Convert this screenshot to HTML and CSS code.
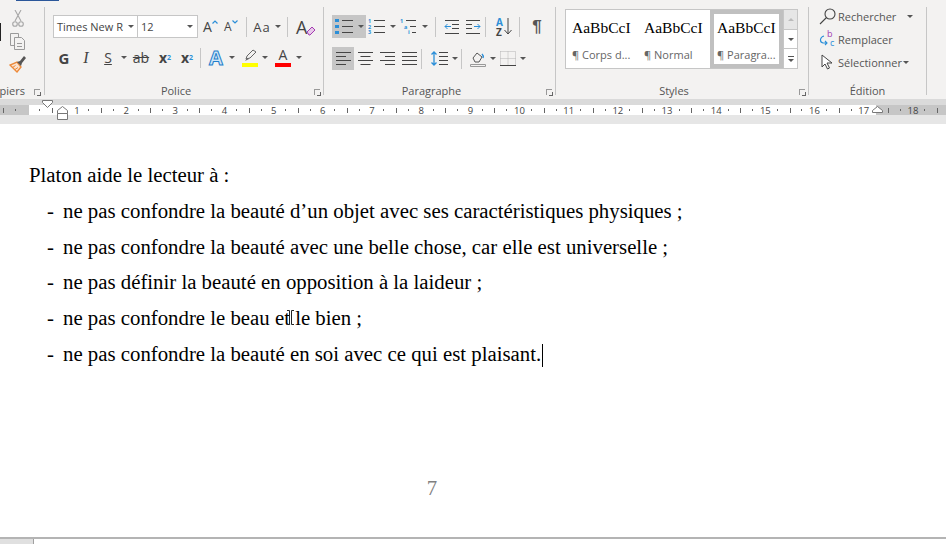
FILE: index.html
```html
<!DOCTYPE html>
<html lang="fr">
<head>
  <meta charset="UTF-8" />
  <title>Document - Word</title>
  <link rel="stylesheet" href="styles.css">
</head>
<body>

<!-- RIBBON -->
<header class="ribbon">
  <div class="tab-mark"></div>

  <!-- Presse-papiers -->
  <section class="group g-clip">
    <div class="clip-col">
      <svg width="18" height="17" viewBox="0 0 18 17" fill="none" stroke="#a6a6a6" stroke-width="1.100"><path d="M6 0l6 11M12 0L6 11"/><circle cx="6" cy="14" r="2.300"/><circle cx="12" cy="14" r="2.300"/></svg>
      <svg width="18" height="17" viewBox="0 0 18 17" fill="#f3f2f1" stroke="#9a9a9a"><path d="M1.500 .5h8v12h-8z"/><path d="M5.500 4.500h7l3 3v9h-10z"/><path d="M8 10.500h5M8 13.500h5" /></svg>
      <svg width="18" height="17" viewBox="0 0 18 17"><path d="M1 9l7 7 4-5-4-5z" fill="#fbe3cf" stroke="#ed8a3a" stroke-width="1.400"/><path d="M3.500 11.500l3-2M6 13.500l3-2" stroke="#ed8a3a"/><path d="M8 6l3-1 4-5 2 2-4 5-1 3z" fill="#555"/></svg>
    </div>
    <div class="cursor-tab"></div>
    <div class="group-label label-end">Presse-papiers</div>
    <span class="launch"></span>
  </section>

  <!-- Police -->
  <section class="group g-font">
    <div class="row r-font-1">
      <div class="combo c-name">Times New R<i class="caret"></i></div>
      <div class="combo c-size">12<i class="caret"></i></div>
      <div class="ico w-a1 big-a">A<svg width="6" height="4" viewBox="0 0 6 4" fill="none" stroke="#2b8fd8" stroke-width="1.200"><path d="M.5 3.500L3 1l2.500 2.500"/></svg></div>
      <div class="ico w-a2 small-a">A<svg width="6" height="4" viewBox="0 0 6 4" fill="none" stroke="#2b8fd8" stroke-width="1.200"><path d="M.5 .5L3 3l2.500-2.500"/></svg></div>
      <span class="sep"></span>
      <div class="ico w-aa case-a">Aa<i class="caret"></i></div>
      <span class="sep"></span>
      <div class="ico w-clear clear-a">A<svg width="10" height="10" viewBox="0 0 10 10"><path d="M1 6l5-5 3 3-5 5H3z" fill="#e8c9ea" stroke="#a23bb0"/></svg></div>
    </div>
    <div class="row r-font-2">
      <div class="ico w22 fmt bold">G</div>
      <div class="ico w22 fmt ital">I</div>
      <div class="ico w22 fmt under">S</div>
      <i class="caret solo c9"></i>
      <div class="ico w26 fmt strike">ab</div>
      <div class="ico w22 fmt bold-x">x<sub>2</sub></div>
      <div class="ico w22 fmt bold-x">x<sup>2</sup></div>
      <span class="sep s2"></span>
      <div class="ico w22 effect-a">A</div>
      <i class="caret solo c14"></i>
      <div class="ico w18">
        <svg width="17" height="18" viewBox="0 0 17 18"><path d="M4 10l1-3 6-6 3 2-6 6z" fill="#f3f2f1" stroke="#666"/><path d="M3 12l2-3 2 1z" fill="#666"/><rect y="14" width="16" height="4" fill="#ffff00"/></svg>
      </div>
      <i class="caret solo c15"></i>
      <div class="ico w18 color-a">A<b></b></div>
      <i class="caret solo c9 c-last"></i>
    </div>
    <div class="group-label">Police</div>
    <span class="launch"></span>
  </section>

  <!-- Paragraphe -->
  <section class="group g-para">
    <div class="row r-para-1">
      <div class="ico w34 on">
        <svg width="19" height="17" viewBox="0 0 19 17"><path d="M0 1h4v3H0zM0 7h4v3H0zM0 13h4v3H0z" fill="#2b8fd8"/><path d="M7 2.500h11M7 8.500h11M7 14.500h11" stroke="#444"/></svg>
        <i class="caret"></i>
      </div>
      <div class="ico w32">
        <svg width="18" height="18" viewBox="0 0 18 18"><text x="0" y="5" class="mini">1</text><text x="0" y="10.500" class="mini">2</text><text x="0" y="16" class="mini">3</text><path d="M6 2.500h11M6 8.500h11M6 14.500h11" stroke="#444"/></svg>
        <i class="caret"></i>
      </div>
      <div class="ico w32">
        <svg width="18" height="18" viewBox="0 0 18 18"><text x="0" y="5" class="mini">1</text><text x="4" y="10.500" class="mini">a</text><text x="8" y="16" class="mini">i</text><path d="M6 2.500h10M10 8.500h6M12 14.500h4" stroke="#444"/></svg>
        <i class="caret"></i>
      </div>
      <span class="sep s3"></span>
      <div class="ico w22">
        <svg width="15" height="14" viewBox="0 0 15 14" fill="none"><path d="M1 .5h14M8 4.500h7M8 8.500h7M1 13.500h14" stroke="#444"/><path d="M7 6.500H1M3.500 4L1 6.500 3.500 9" stroke="#2b8fd8"/></svg>
      </div>
      <div class="ico w22">
        <svg width="15" height="14" viewBox="0 0 15 14" fill="none"><path d="M0 .5h14M0 4.500h6M0 8.500h6M0 13.500h14" stroke="#444"/><path d="M8 6.500h6M11.500 4L14 6.500 11.500 9" stroke="#2b8fd8"/></svg>
      </div>
      <span class="sep s4"></span>
      <div class="ico w24 sort-az"><span class="az"><em>A</em><span>Z</span></span><svg width="8" height="17" viewBox="0 0 8 17" fill="none" stroke="#444"><path d="M4 0v16M.5 12L4 16l3.500-4"/></svg></div>
      <span class="sep s5"></span>
      <div class="ico w30 pilcrow">¶</div>
    </div>
    <div class="row r-para-2">
      <div class="ico w22 on"><svg width="15" height="13" viewBox="0 0 15 13" stroke="#444"><path d="M0 .5h15M0 4.500h10M0 8.500h15M0 12.500h10"/></svg></div>
      <div class="ico w22"><svg width="15" height="13" viewBox="0 0 15 13" stroke="#444"><path d="M0 .5h15M2.500 4.500h10M0 8.500h15M2.500 12.500h10"/></svg></div>
      <div class="ico w22"><svg width="15" height="13" viewBox="0 0 15 13" stroke="#444"><path d="M0 .5h15M5 4.500h10M0 8.500h15M5 12.500h10"/></svg></div>
      <div class="ico w22"><svg width="15" height="13" viewBox="0 0 15 13" stroke="#444"><path d="M0 .5h15M0 4.500h15M0 8.500h15M0 12.500h15"/></svg></div>
      <span class="sep s6"></span>
      <div class="ico w32">
        <svg width="17" height="15" viewBox="0 0 17 15" fill="none"><path d="M3 1v13M.5 3.500L3 1l2.500 2.500M.5 11.500L3 14l2.500-2.500" stroke="#2b8fd8" stroke-width="1.300"/><path d="M8 1.500h9M8 5.500h9M8 9.500h9M8 13.500h9" stroke="#444"/></svg>
        <i class="caret"></i>
      </div>
      <span class="sep s7"></span>
      <div class="ico w28">
        <svg width="16" height="16" viewBox="0 0 16 16" fill="none"><path d="M3 7l4-5 5 4-3 5H5z" stroke="#555"/><path d="M12 3c1 1 2 2 1 4" stroke="#2b8fd8" stroke-width="1.500"/><path d="M.5 13.500h15v2H.5z" stroke="#999"/></svg>
        <i class="caret"></i>
      </div>
      <div class="ico w32">
        <svg width="16" height="15" viewBox="0 0 16 15" fill="none"><path d="M.5 .5h15v14M.5 .5v14M8 .5v13M.5 7.500h15" stroke="#b5b5b5" stroke-dasharray="1 1"/><path d="M0 14.500h16" stroke="#444"/></svg>
        <i class="caret"></i>
      </div>
    </div>
    <div class="group-label">Paragraphe</div>
    <span class="launch"></span>
  </section>

  <!-- Styles -->
  <section class="group g-styles">
    <div class="gallery">
      <div class="style-card"><span class="style-sample">AaBbCcI</span><span class="style-name">¶ Corps d...</span></div>
      <div class="style-card"><span class="style-sample">AaBbCcI</span><span class="style-name">¶ Normal</span></div>
      <div class="style-card current"><span class="style-sample">AaBbCcI</span><span class="style-name">¶ Paragra...</span></div>
      <div class="gallery-scroll">
        <span class="disabled"><i class="up"></i></span>
        <span><i class="caret"></i></span>
        <span class="more"><i class="caret"></i></span>
      </div>
    </div>
    <div class="group-label">Styles</div>
    <span class="launch"></span>
  </section>

  <!-- Edition -->
  <section class="group g-edit">
    <div class="edit-col">
      <div class="edit-row">
        <svg width="18" height="17" viewBox="0 0 18 17" fill="none" stroke="#444" stroke-width="1.100"><circle cx="11" cy="6" r="5"/><path d="M7.500 9.500L1 16"/></svg>
        <span>Rechercher</span><i class="caret far"></i>
      </div>
      <div class="edit-row">
        <svg width="18" height="18" viewBox="0 0 18 18" fill="none"><text x="8" y="7" class="rep-b">b</text><text x="11" y="16" class="rep-c">c</text><path d="M5 6C1 7 0 12 4 13h4M6 11l2 2-2 2" stroke="#2b8fd8" stroke-width="1.100"/></svg>
        <span>Remplacer</span>
      </div>
      <div class="edit-row">
        <svg width="18" height="17" viewBox="0 0 18 17"><path d="M3 1v12l3-3 2.500 5 2-1L8 9h5z" fill="#fff" stroke="#444"/></svg>
        <span>Sélectionner</span><i class="caret near"></i>
      </div>
    </div>
    <div class="group-label">Édition</div>
  </section>
</header>

<!-- RULER -->
<div class="ruler-band">
  <div class="ruler">
    <span></span><span>1</span><span>2</span><span>3</span><span>4</span><span>5</span><span>6</span><span>7</span><span>8</span><span>9</span>
    <span>10</span><span>11</span><span>12</span><span>13</span><span>14</span><span>15</span><span>16</span><span>17</span><span>18</span>
  </div>
  <svg class="marker m-first" width="11" height="8" viewBox="0 0 11 8"><path d="M.5 .5h10v2l-5 5-5-5z" fill="#fff" stroke="#777"/></svg>
  <svg class="marker m-hang" width="11" height="14" viewBox="0 0 11 14"><path d="M5.500 .5l5 4v3H.5v-3z" fill="#fff" stroke="#777"/><path d="M.5 7.500h10v6H.5z" fill="#fff" stroke="#777"/></svg>
  <svg class="marker m-right" width="11" height="7" viewBox="0 0 11 7"><path d="M5.500 .5l5 4v2H.5v-2z" fill="#fff" stroke="#777"/></svg>
</div>

<!-- PAGE -->
<main class="page">
  <p class="doc-line">Platon aide le lecteur à :</p>
  <ul class="doc-list">
    <li>ne pas confondre la beauté d’un objet avec ses caractéristiques physiques ;</li>
    <li>ne pas confondre la beauté avec une belle chose, car elle est universelle ;</li>
    <li>ne pas définir la beauté en opposition à la laideur ;</li>
    <li>ne pas confondre le beau et le bien ;<svg class="ibeam" width="7" height="15" viewBox="0 0 7 15" fill="none" stroke="#222"><path d="M0 .5h2.500v14H0M7 .5H4.500v14H7"/></svg></li>
    <li>ne pas confondre la beauté en soi avec ce qui est plaisant.<span class="caret-line"></span></li>
  </ul>
  <div class="page-num">7</div>
</main>

<footer class="bottom"><div class="bottom-left"></div></footer>

</body>
</html>
```

FILE: styles.css
```css
html, body {
  margin: 0;
  height: 544px;
  overflow: hidden;
  background-color: #ffffff;
}
body {
  font-family: "Open Sans", "Noto Sans", sans-serif;
  color: #444;
}

/* RIBBON */
.ribbon {
  position: relative;
  display: flex;
  height: 99px;
  background-color: #f3f2f1;
}
.tab-mark {
  position: absolute;
  left: 16px;
  top: 0;
  width: 43px;
  height: 1px;
  background-color: #2b579a;
}
.group {
  position: relative;
  box-sizing: border-box;
  height: 88px;
  margin-top: 7px;
  border-right: 1px solid #c6c6c6;
  margin-right: 0;
}
.g-clip { width: 45px; }
.g-font { width: 279px; padding-left: 8px; }
.g-para { width: 232px; padding-left: 8px; }
.g-styles { width: 253px; padding-left: 9px; }
.g-edit { width: 118px; padding-left: 11px; }

.group-label {
  position: absolute;
  left: 0;
  right: 16px;
  bottom: -3px;
  height: 15px;
  font-size: 11px;
  line-height: 15px;
  text-align: center;
  white-space: nowrap;
  color: #555;
}
.g-edit .group-label { right: 0; }
.label-end {
  right: 19px;
  display: flex;
  justify-content: flex-end;
  overflow: hidden;
}

/* Presse-papiers */
.clip-col {
  display: flex;
  flex-direction: column;
  gap: 6px;
  padding: 3px 0 0 9px;
}
.clip-col svg { display: block; }
.cursor-tab {
  position: absolute;
  left: 0;
  top: 16px;
  width: 1px;
  height: 18px;
  background-color: #222;
}

/* little dialog launcher in group corner */
.launch {
  position: absolute;
  right: 3px;
  bottom: 0;
  width: 5px;
  height: 5px;
  border: 1px solid #999;
  border-width: 1px 0 0 1px;
}
.launch::after {
  content: "";
  position: absolute;
  right: -1px;
  bottom: -1px;
  width: 3px;
  height: 3px;
  border: 1px solid #666;
  border-width: 0 1px 1px 0;
}
.g-clip .launch { right: 4px; }

.row {
  display: flex;
  align-items: center;
}
.r-font-1, .r-para-1 { height: 23px; margin-top: 8px; }
.r-font-2 { height: 23px; margin-top: 8px; }
.r-para-2 { height: 23px; margin-top: 9px; }

.ico {
  position: relative;
  flex: none;
  display: flex;
  align-items: center;
  justify-content: center;
  height: 23px;
  box-sizing: border-box;
}
.ico.on { background-color: #c6c6c6; }
.w18 { width: 18px; }
.w22 { width: 22px; }
.w24 { width: 24px; }
.w26 { width: 26px; }
.w28 { width: 28px; }
.w30 { width: 30px; }
.w32 { width: 32px; }
.w34 { width: 34px; }

.caret {
  display: inline-block;
  flex: none;
  width: 0;
  height: 0;
  margin-left: 4px;
  border: 3px solid transparent;
  border-top: 3px solid #555;
  border-bottom-width: 0;
}
.caret.solo {
  box-sizing: border-box;
  border: 0;
  height: 3px;
  background: linear-gradient(#555, #555) no-repeat;
  clip-path: polygon(0 0, 6px 0, 3px 3px);
}
.c9 { width: 7px; margin-left: 2px; }
.c14 { width: 12px; margin-left: 2px; }
.c15 { width: 12px; margin-left: 3px; }
.caret.solo.c9 { margin-left: 2px; }
.caret.solo.c14 { margin-left: 2px; }
.caret.solo.c15 { margin-left: 3px; }
.caret.solo.c-last { margin-left: 4px; }
.sep {
  flex: none;
  width: 1px;
  height: 20px;
  margin: 0 7px;
  background-color: #c6c6c6;
}

/* Police */
.combo {
  flex: none;
  box-sizing: border-box;
  display: flex;
  align-items: center;
  justify-content: space-between;
  height: 23px;
  padding: 0 4px 0 3px;
  background-color: #fff;
  border: 1px solid #c6c6c6;
  font-size: 11px;
  white-space: nowrap;
}
.c-name { width: 85px; padding-right: 3px; }
.c-size { width: 61px; margin-left: -1px; margin-right: 5px; }
.w-a1 { width: 15px; margin-right: 6px; }
.w-a2 { width: 15px; }
.w-aa { width: 26px; }
.w-clear { width: 20px; margin-left: 1px; }
.big-a { font-size: 14px; justify-content: flex-start; }
.small-a { font-size: 12px; justify-content: flex-start; }
.big-a svg, .small-a svg { align-self: flex-start; margin-top: 5px; }
.case-a { font-size: 13px; letter-spacing: 1px; }
.clear-a { font-size: 18px; justify-content: flex-start; font-weight: 400; }
.clear-a svg { position: absolute; right: 0; bottom: 2px; }

.fmt { font-size: 15px; color: #444; }
.bold { font-weight: 700; }
.ital { font-family: "Liberation Serif", serif; font-style: italic; font-size: 16px; }
.under { font-size: 14px; text-decoration: underline; }
.strike { text-decoration: line-through; font-size: 14px; }
.bold-x { font-weight: 700; font-size: 14px; }
.bold-x sub, .bold-x sup {
  font-size: 7px;
  line-height: 0;
  color: #2b8fd8;
}
.s2 { margin: 0 4px 0 2px; }
.effect-a {
  font-size: 20px;
  font-weight: 700;
  color: #cfe6f7;
  -webkit-text-stroke: 1px #1f7fcc;
}
.color-a { font-size: 14px; align-items: flex-start; line-height: 17px; }
.color-a b {
  position: absolute;
  left: 1px;
  bottom: 2px;
  width: 16px;
  height: 4px;
  background-color: #ff0000;
}

/* Paragraphe */
.g-para .row .ico svg { flex: none; }
.mini {
  font-size: 5.500px;
  font-weight: 700;
  fill: #2b8fd8;
}
.s3 { margin: 0 4px 0 5px; }
.s4 { margin: 0 6px 0 1px; }
.s5 { margin: 0 2px 0 3px; }
.s6 { margin: 0 6px 0 1px; }
.s7 { margin: 0 7px 0 1px; }
.sort-az { gap: 1px; }
.az {
  display: flex;
  flex-direction: column;
  font-size: 10px;
  line-height: 10px;
  font-weight: 700;
}
.az em { font-style: normal; color: #2b8fd8; }
.pilcrow {
  font-family: "Liberation Sans", sans-serif;
  font-size: 17px;
  font-weight: 700;
  color: #555;
}

/* Styles gallery */
.gallery {
  display: flex;
  box-sizing: border-box;
  width: 233px;
  height: 60px;
  margin-top: 2px;
  background-color: #fff;
  border: 1px solid #c6c6c6;
}
.style-card {
  box-sizing: border-box;
  width: 72px;
  padding: 8px 0 0 6px;
  display: flex;
  flex-direction: column;
  white-space: nowrap;
}
.style-card.current {
  width: 73px;
  padding: 4px 0 0 3px;
  border: 4px solid #c0c0c0;
  background-color: #fff;
}
.style-sample {
  font-family: "Liberation Serif", serif;
  font-size: 15.500px;
  line-height: 20px;
  color: #000;
}
.style-name {
  font-size: 11px;
  line-height: 20px;
  margin-top: 7px;
  color: #666;
}
.gallery-scroll {
  display: flex;
  flex-direction: column;
  flex: 1;
}
.gallery-scroll span {
  flex: 1;
  display: flex;
  align-items: center;
  justify-content: center;
  border-left: 1px solid #c6c6c6;
  border-bottom: 1px solid #c6c6c6;
}
.gallery-scroll span:last-child { border-bottom: 0; }
.gallery-scroll .caret { margin: 0; }
.gallery-scroll .disabled { background-color: #e6e6e6; }
.gallery-scroll .up {
  width: 0;
  height: 0;
  border: 3px solid transparent;
  border-bottom: 3px solid #bbb;
  border-top-width: 0;
}
.gallery-scroll .more { flex-direction: column; gap: 2px; }
.gallery-scroll .more::before {
  content: "";
  width: 6px;
  height: 1px;
  background-color: #555;
}

/* Edition */
.edit-col {
  display: flex;
  flex-direction: column;
  gap: 5px;
  margin-top: -1px;
  margin-left: -1px;
  padding-top: 1px;
}
.edit-row {
  display: flex;
  align-items: center;
  height: 18px;
  font-size: 11px;
  white-space: nowrap;
  color: #555;
}
.edit-row svg { flex: none; width: 18px; }
.edit-row span { margin-left: 1px; }
.caret.far { margin-left: 11px; }
.caret.near { margin-left: 1px; }
.rep-b { font-size: 9px; fill: #a23bb0; }
.rep-c { font-size: 9px; fill: #2b8fd8; }

/* RULER */
.ruler-band {
  position: relative;
  box-sizing: border-box;
  height: 25px;
  padding-top: 6px;
  background: linear-gradient(#dadada 6px, #e6e6e6 6px);
}
.ruler {
  display: flex;
  height: 10px;
  padding-left: 3.220px;
  font-size: 9.500px;
  line-height: 11px;
  color: #444;
  background:
    repeating-linear-gradient(90deg, transparent 0 2.640px, #666 2.640px 3.640px, transparent 3.640px 49.180px) 0 50% / 100% 5px no-repeat,
    repeating-linear-gradient(90deg, transparent 0 14.600px, #666 14.600px 15.600px, transparent 15.600px 24.590px) 0 50% / 100% 2px no-repeat,
    linear-gradient(90deg, #c6c6c6 29px, #fff 29px, #fff 876px, #c6c6c6 876px);
}
.ruler span {
  flex: none;
  width: 49.180px;
  text-align: center;
}
.marker {
  position: absolute;
}
.m-first { left: 42px; top: 1px; }
.m-hang { left: 57px; top: 7px; }
.m-right { left: 872px; top: 7px; }

/* PAGE */
.page {
  box-sizing: border-box;
  height: 413px;
  padding: 33px 0 0 29px;
  background-color: #fff;
  font-family: "Liberation Serif", serif;
  font-size: 20.800px;
  line-height: 35.800px;
  color: #000;
}
.doc-line { margin: 0; }
.doc-list {
  margin: 0;
  padding: 0;
  list-style: none;
}
.doc-list li {
  position: relative;
  padding-left: 34px;
  white-space: nowrap;
}
.doc-list li::before {
  content: "-";
  position: absolute;
  left: 18px;
}
.ibeam {
  position: absolute;
  left: 258px;
  top: 10px;
}
.caret-line {
  display: inline-block;
  width: 1px;
  height: 23px;
  margin-left: 1px;
  vertical-align: -6px;
  background-color: #000;
}
.page-num {
  width: 806px;
  margin-top: 98px;
  text-align: center;
  color: #7f7f7f;
}

/* bottom edge */
.bottom {
  box-sizing: border-box;
  height: 7px;
  border-top: 2px solid #b4b4b4;
}
.bottom-left {
  width: 33px;
  height: 5px;
  background-color: #e0e0e0;
  border-right: 1px solid #a0a0a0;
}
```
